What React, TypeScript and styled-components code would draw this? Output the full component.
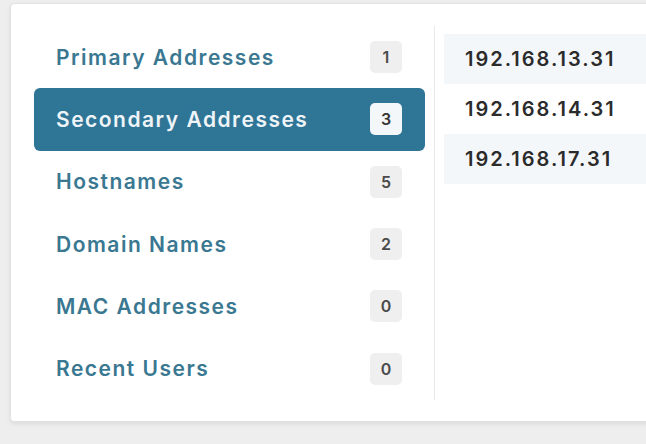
import styled, { createGlobalStyle } from 'styled-components';

const GlobalStyle = createGlobalStyle`
  html, body {
    margin: 0;
    padding: 0;
    background: #eeeeee;
    font-family: Inter, "Noto Sans", "Liberation Sans", sans-serif;
  }
`;

const Page = styled.div`
  width: 646px;
  height: 444px;
  overflow: hidden;
  padding: 3px 0 0 10px;
  box-sizing: border-box;
`;

// 흰색 카드
const Card = styled.div`
  display: flex;
  width: 660px;
  height: 419px;
  box-sizing: border-box;
  padding: 22px 0 21px 23px;
  background: #ffffff;
  border: 1px solid #e2e2e2;
  border-radius: 4px;
  box-shadow: 0 2px 4px rgba(0, 0, 0, 0.08);
`;

const Menu = styled.ul`
  list-style: none;
  margin: 0;
  padding: 0;
  width: 391px;
  display: flex;
  flex-direction: column;
`;

const MenuItem = styled.li<{ $active?: boolean }>`
  display: flex;
  align-items: center;
  justify-content: space-between;
  height: 62.5px;
  padding: 0 23px 0 22px;
  border-radius: 6px;
  background: ${(p) => (p.$active ? '#2e7596' : 'transparent')};
  color: ${(p) => (p.$active ? '#eef4f8' : '#3a7891')};
  font-weight: 600;
  font-size: 21px;
  letter-spacing: 1.5px;
`;

const Badge = styled.span<{ $active?: boolean }>`
  display: flex;
  align-items: center;
  justify-content: center;
  width: 32px;
  height: 32px;
  border-radius: 5px;
  background: ${(p) => (p.$active ? '#f3f7fa' : '#efefef')};
  color: ${(p) => (p.$active ? '#333' : '#4a4a4a')};
  font-size: 16px;
  font-weight: 600;
  letter-spacing: 0;
`;

const Divider = styled.div`
  width: 1px;
  margin: 0 9px;
  background: #e8e8e8;
`;

const Results = styled.div`
  flex: 1;
  padding-top: 8px;
  display: flex;
  flex-direction: column;
`;

const ResultRow = styled.div<{ $striped?: boolean }>`
  display: flex;
  align-items: center;
  height: 50px;
  padding-left: 21px;
  background: ${(p) => (p.$striped ? '#f4f7fa' : '#ffffff')};
  color: #2b2b2b;
  font-size: 20px;
  font-weight: 600;
  letter-spacing: 2px;
`;

const items = [
  { label: 'Primary Addresses', count: 1 },
  { label: 'Secondary Addresses', count: 3 },
  { label: 'Hostnames', count: 5 },
  { label: 'Domain Names', count: 2 },
  { label: 'MAC Addresses', count: 0 },
  { label: 'Recent Users', count: 0 },
];

const addresses = ['192.168.13.31', '192.168.14.31', '192.168.17.31'];

const App = () => {
  const active = 1;
  return (
    <Page>
      <GlobalStyle />
      <Card>
        <Menu>
          {items.map((item, i) => (
            <MenuItem key={item.label} $active={i === active}>
              {item.label}
              <Badge $active={i === active}>{item.count}</Badge>
            </MenuItem>
          ))}
        </Menu>
        <Divider />
        <Results>
          {addresses.map((ip, i) => (
            <ResultRow key={ip} $striped={i % 2 === 0}>
              {ip}
            </ResultRow>
          ))}
        </Results>
      </Card>
    </Page>
  );
};

export default App;
